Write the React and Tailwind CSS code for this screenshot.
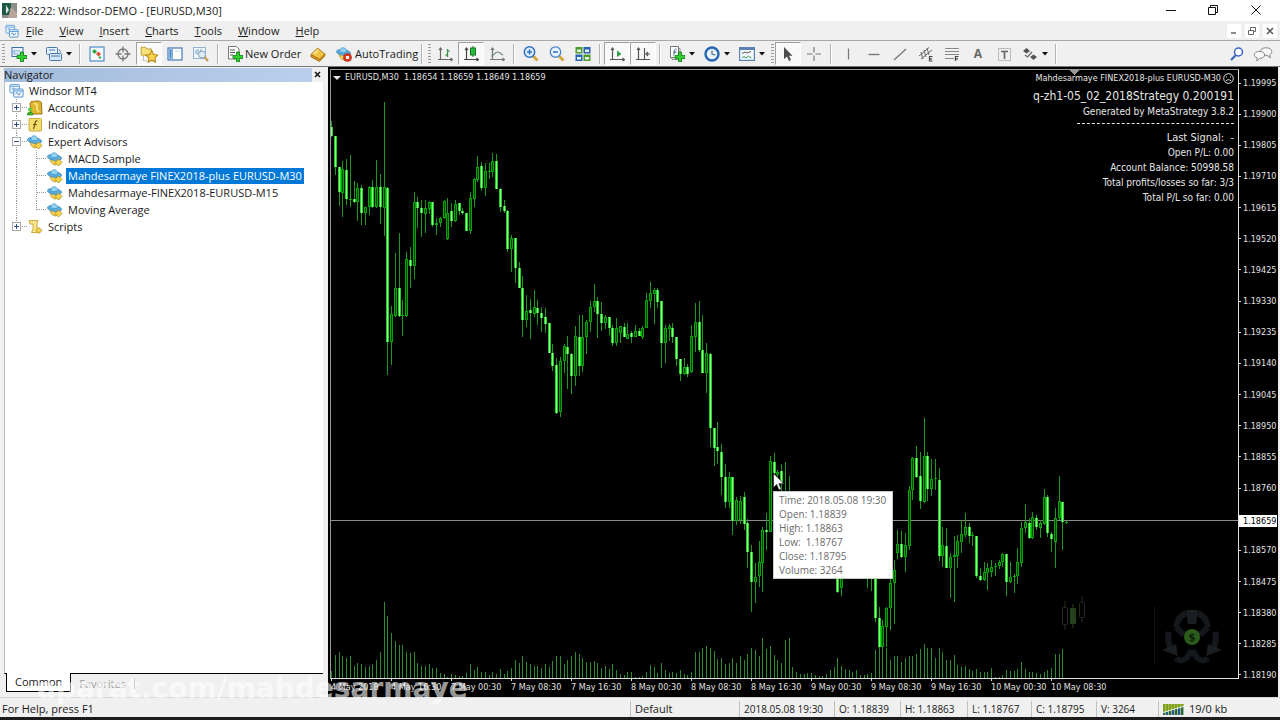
import React, { useState } from 'react';
import clsx from 'clsx';

const uiFont = "font-['Open_Sans','Noto_Sans',sans-serif]";
const chartFont = "font-['DejaVu_Sans_Condensed','DejaVu_Sans',sans-serif]";

// [high, body top, body bottom, low, 1 = falling / 0 = rising]
const candles = [
  [121, 127, 136, 137, 1], [136, 136, 167, 175, 1], [167, 167, 192, 206, 1], [161, 169, 193, 217, 0],
  [159, 170, 199, 205, 1], [155, 199, 200, 207, 0], [181, 199, 202, 203, 1], [183, 188, 202, 221, 0],
  [185, 188, 213, 225, 1], [207, 207, 213, 225, 0], [186, 187, 207, 215, 0], [180, 187, 207, 208, 1],
  [160, 187, 207, 208, 0], [174, 187, 207, 224, 1], [102, 187, 208, 236, 0], [187, 188, 342, 375, 1],
  [306, 314, 342, 365, 0], [253, 288, 316, 317, 0], [233, 288, 316, 317, 1], [300, 315, 316, 336, 0],
  [252, 259, 316, 317, 0], [247, 260, 266, 288, 1], [192, 202, 266, 279, 0], [197, 202, 208, 228, 1],
  [200, 208, 213, 237, 1], [200, 208, 214, 233, 0], [201, 202, 209, 214, 0], [202, 202, 225, 227, 1],
  [218, 223, 225, 235, 0], [217, 218, 223, 227, 0], [200, 201, 218, 219, 0], [198, 213, 239, 240, 0],
  [203, 211, 221, 227, 1], [200, 204, 221, 222, 0], [203, 203, 211, 215, 1], [208, 211, 213, 215, 1],
  [213, 213, 231, 231, 1], [192, 198, 231, 234, 0], [178, 179, 199, 207, 0], [156, 167, 180, 182, 0],
  [162, 166, 188, 191, 1], [163, 171, 188, 196, 0], [163, 171, 172, 179, 0], [153, 161, 172, 177, 0],
  [154, 161, 189, 189, 1], [188, 189, 207, 212, 1], [200, 206, 211, 213, 1], [210, 211, 249, 252, 1],
  [235, 238, 249, 272, 0], [238, 238, 268, 283, 1], [262, 268, 288, 288, 1], [276, 288, 320, 337, 1],
  [295, 311, 320, 327, 0], [299, 310, 313, 339, 1], [290, 307, 314, 317, 0], [300, 308, 313, 325, 1],
  [307, 313, 318, 332, 1], [308, 317, 324, 333, 1], [323, 323, 353, 353, 1], [344, 353, 366, 371, 1],
  [358, 365, 413, 414, 1], [357, 361, 412, 417, 0], [344, 346, 361, 373, 0], [336, 347, 354, 389, 1],
  [353, 354, 376, 394, 1], [326, 336, 376, 386, 0], [315, 337, 366, 376, 1], [315, 337, 366, 372, 0],
  [320, 322, 337, 354, 0], [301, 307, 322, 332, 0], [284, 301, 307, 312, 0], [297, 301, 314, 338, 1],
  [302, 314, 323, 331, 1], [315, 317, 323, 329, 0], [317, 317, 328, 335, 1], [325, 328, 343, 346, 1],
  [318, 328, 343, 346, 0], [326, 326, 333, 343, 0], [323, 327, 337, 337, 1], [323, 334, 339, 339, 0],
  [331, 333, 337, 343, 1], [325, 331, 337, 337, 0], [328, 331, 336, 336, 1], [326, 328, 337, 339, 0],
  [293, 300, 328, 328, 0], [282, 293, 301, 308, 0], [288, 290, 294, 324, 0], [288, 290, 302, 308, 1],
  [301, 301, 343, 368, 1], [325, 328, 343, 363, 0], [324, 326, 329, 341, 0], [323, 328, 337, 343, 1],
  [337, 337, 359, 366, 1], [359, 359, 374, 381, 1], [358, 367, 374, 375, 0], [364, 367, 374, 377, 1],
  [325, 336, 372, 373, 0], [303, 322, 337, 352, 0], [301, 322, 350, 352, 1], [315, 350, 373, 373, 1],
  [343, 353, 373, 393, 0], [353, 354, 428, 447, 1], [428, 428, 448, 466, 1], [422, 447, 451, 464, 1],
  [444, 452, 477, 495, 1], [464, 477, 502, 508, 1], [472, 477, 502, 508, 0], [477, 477, 521, 535, 1],
  [497, 500, 521, 525, 0], [496, 501, 520, 524, 0], [492, 497, 524, 530, 1], [519, 523, 552, 568, 1],
  [545, 552, 582, 612, 1], [563, 577, 582, 603, 0], [541, 562, 576, 587, 0], [527, 530, 563, 592, 0],
  [513, 530, 532, 550, 1], [456, 461, 532, 532, 0], [453, 462, 473, 475, 1], [470, 472, 475, 477, 0],
  [464, 471, 482, 493, 1], [462, 492, 500, 510, 0], [476, 492, 512, 520, 1], [505, 512, 530, 534, 1],
  [512, 516, 530, 540, 0], [510, 516, 528, 535, 1], [520, 528, 541, 548, 1], [526, 530, 541, 550, 0],
  [524, 530, 545, 552, 1], [530, 545, 552, 560, 1], [535, 541, 552, 561, 0], [538, 541, 556, 562, 1],
  [545, 550, 556, 566, 0], [544, 550, 560, 570, 1], [548, 560, 568, 572, 1], [560, 568, 592, 593, 1],
  [562, 572, 588, 596, 0], [550, 560, 572, 575, 0], [548, 552, 560, 570, 0], [545, 552, 562, 570, 1],
  [540, 550, 562, 566, 0], [545, 550, 560, 570, 1], [550, 558, 566, 572, 1], [550, 566, 572, 588, 1],
  [548, 560, 572, 591, 0], [552, 560, 618, 622, 1], [607, 618, 647, 648, 1], [620, 626, 647, 648, 0],
  [607, 608, 627, 647, 0], [570, 583, 608, 630, 0], [560, 570, 583, 624, 0], [530, 544, 553, 559, 0],
  [531, 544, 557, 558, 1], [533, 545, 557, 572, 0], [486, 490, 546, 550, 0], [457, 458, 490, 500, 0],
  [446, 458, 477, 478, 1], [452, 476, 501, 509, 1], [418, 456, 502, 503, 0], [452, 456, 489, 501, 1],
  [459, 479, 489, 496, 0], [459, 478, 479, 490, 0], [468, 480, 556, 561, 1], [527, 545, 556, 567, 0],
  [528, 546, 568, 568, 1], [553, 557, 568, 598, 0], [536, 555, 557, 602, 0], [535, 541, 556, 568, 0],
  [520, 534, 542, 553, 0], [513, 527, 535, 537, 0], [523, 527, 536, 543, 1], [532, 535, 536, 546, 0],
  [536, 536, 576, 578, 1], [568, 576, 580, 581, 1], [562, 572, 580, 581, 0], [563, 568, 573, 590, 0],
  [560, 567, 572, 577, 0], [563, 566, 567, 576, 0], [560, 562, 566, 569, 0], [553, 554, 562, 567, 0],
  [554, 554, 582, 596, 1], [562, 577, 582, 583, 0], [574, 576, 577, 593, 0], [548, 562, 576, 584, 0],
  [522, 528, 563, 567, 0], [504, 522, 528, 533, 0], [518, 523, 538, 539, 1], [512, 517, 538, 539, 0],
  [515, 518, 527, 530, 1], [520, 523, 528, 538, 0], [489, 497, 524, 525, 0], [495, 497, 533, 537, 1],
  [532, 534, 539, 552, 1], [508, 518, 542, 568, 0], [476, 501, 518, 520, 0], [502, 502, 522, 550, 1],
  [521, 522, 523, 524, 0],
];

const volumes = [
  7, 23, 26, 22, 20, 22, 12, 15, 14, 11, 12, 14, 18, 26, 76, 62, 45, 37, 33, 33, 26, 25, 26, 15, 12, 12, 14,
  10, 10, 5, 4, 1, 4, 3, 2, 2, 5, 14, 8, 11, 6, 6, 3, 6, 4, 9, 4, 7, 10, 18, 15, 22, 16, 14, 12, 12, 10, 14,
  11, 17, 22, 22, 14, 18, 22, 26, 24, 20, 16, 16, 17, 15, 10, 12, 9, 14, 8, 4, 3, 6, 6, 1, 1, 2, 6, 13, 11,
  5, 15, 8, 5, 6, 5, 8, 4, 3, 6, 26, 26, 30, 32, 30, 27, 19, 20, 14, 15, 20, 15, 22, 18, 24, 30, 28, 22, 40,
  29, 32, 23, 18, 15, 38, 40, 11, 6, 4, 4, 5, 5, 3, 2, 2, 4, 8, 11, 20, 12, 9, 8, 6, 8, 3, 3, 4, 5, 28, 30,
  30, 30, 18, 22, 22, 16, 20, 22, 22, 24, 29, 34, 30, 30, 20, 30, 26, 18, 18, 23, 13, 11, 12, 9, 7, 9, 6, 6,
  6, 10, 1, 1, 3, 8, 7, 7, 9, 16, 9, 6, 6, 5, 4, 6, 8, 10, 24, 24, 29,
];

const prices = [
  '1.19995', '1.19900', '1.19805', '1.19710', '1.19615', '1.19520', '1.19425', '1.19330', '1.19235', '1.19140',
  '1.19045', '1.18950', '1.18855', '1.18760', '1.18665', '1.18570', '1.18475', '1.18380', '1.18285', '1.18190',
];

const times = [
  '4 May 2018', '4 May 16:30', '7 May 00:30', '7 May 08:30', '7 May 16:30', '8 May 00:30', '8 May 08:30',
  '8 May 16:30', '9 May 00:30', '9 May 08:30', '9 May 16:30', '10 May 00:30', '10 May 08:30',
];

const Icon = ({ children, size = 16 }) => (
  <svg width={size} height={size} viewBox="0 0 16 16" fill="none" className="shrink-0" aria-hidden="true">
    {children}
  </svg>
);

const Plus = () => (
  <path d="M9.500 6h3v3.500H16v3h-3.500V16h-3v-3.500H6v-3h3.500z" fill="#2fd02f" stroke="#0a7a12" strokeWidth=".8" />
);

const WindowsIcon = ({ size = 14 }) => (
  <Icon size={size}>
    <rect x="1" y="1.500" width="10" height="9" rx="1" fill="#eef6ff" stroke="#5b9bd8" />
    <path d="M1 3.500h10M3 7l1.500-2 1.500 2" stroke="#5b9bd8" />
    <rect x="5" y="6.500" width="10" height="8.500" rx="1" fill="#f6faff" stroke="#4a8bcb" />
    <path d="M5 8.500h10M7 12l1.500-2 2 3 2-3" stroke="#4a8bcb" />
  </Icon>
);

const ExpertIcon = ({ size = 16, children }) => (
  <Icon size={size}>
    <path d="M3 8.500c1 4 3 5.500 6 5.500l2-6z" fill="#f1cf54" stroke="#b38a1c" strokeWidth=".7" />
    <ellipse cx="7.500" cy="6.500" rx="7.200" ry="2.800" fill="#5cadde" stroke="#2f83b8" strokeWidth=".7" transform="rotate(8 7.500 6.500)" />
    <path d="M3.500 5.500C4 1 9.500 0 11 5.500c-2 1.500-5 1.500-7.500 0z" fill="#93d2f1" stroke="#3a90c4" strokeWidth=".7" />
    {children || <path d="M11.500 8l3.500 3.500-3.500 3.500L8 11.500z" fill="#f7d64e" stroke="#ad8213" strokeWidth=".8" />}
  </Icon>
);

const icons = {
  newChart: (
    <Icon>
      <rect x="1" y="1.500" width="11" height="9" fill="#eaf4ff" stroke="#3f6fa8" />
      <path d="M3 8V4m0 1h6M3 8h6" stroke="#7da7d4" />
      <Plus />
    </Icon>
  ),
  profiles: (
    <Icon>
      <rect x=".5" y="1.500" width="11" height="7" rx="1" fill="#e8f2fd" stroke="#4774ae" />
      <path d="M3 4h6" stroke="#4774ae" />
      <rect x="3.500" y="7.500" width="12" height="7" rx="1" fill="#d5e7fa" stroke="#4774ae" />
      <path d="M5 10h9M13 3.500l2 3" stroke="#4774ae" />
    </Icon>
  ),
  market: (
    <Icon>
      <rect x="1" y="1" width="14" height="14" fill="#f7fbff" stroke="#5d93c9" strokeWidth="1.300" />
      <path d="M5.500 3L8 5.500 5.500 8 3 5.500z" fill="#27a844" />
      <path d="M9.500 5.500L12 8l-2.500 2.500L7 8z" fill="#e04a2f" />
      <path d="M11 10l1.500 1.500L11 13l-1.500-1.500z" fill="#27a844" />
    </Icon>
  ),
  data: (
    <Icon>
      <circle cx="8" cy="8" r="5" stroke="#777" strokeWidth="1.300" />
      <path d="M8 .5v6M8 9.500v6M.5 8h6M9.500 8h6" stroke="#777" strokeWidth="1.300" />
    </Icon>
  ),
  navigator: (
    <Icon size={18}>
      <path d="M1 2h4l1 1.500h4V9H1z" fill="#f6e27a" stroke="#b9982b" strokeWidth=".8" />
      <path d="M3 10v4h3" stroke="#999" strokeDasharray="1 1" />
      <path d="M10.500 5l1.700 3.400 3.600.5-2.600 2.600.6 3.800-3.300-1.800-3.300 1.800.6-3.800L5.200 8.900l3.600-.5z" fill="#f9d44a" stroke="#b48414" strokeWidth=".9" />
    </Icon>
  ),
  terminal: (
    <Icon>
      <rect x="1" y="2" width="14" height="12" fill="#fff" stroke="#4578b4" strokeWidth="1.200" />
      <path d="M2 3h4v10H2z" fill="#7fb0e2" />
      <path d="M3 5h1M3 7.500h1M3 10h1" stroke="#1e4777" />
      <path d="M8 5h5" stroke="#bcd3ea" />
    </Icon>
  ),
  tester: (
    <Icon>
      <rect x=".5" y="1.500" width="12" height="11" fill="#eef5fb" stroke="#92b2d2" />
      <path d="M3 4v4m2-5v6m3-6v4" stroke="#7d9dbd" />
      <circle cx="9" cy="8.500" r="3.500" fill="#d6e9f7" fillOpacity=".7" stroke="#8aa6bf" />
      <path d="M11.500 11l3.500 4" stroke="#c79a4e" strokeWidth="2" />
    </Icon>
  ),
  order: (
    <Icon>
      <path d="M1.500.5h8L12 3v10H1.500z" fill="#fff" stroke="#777" />
      <path d="M3 4h5M3 6.500h5M3 9h3" stroke="#555" />
      <Plus />
    </Icon>
  ),
  book: (
    <Icon>
      <path d="M1 8.500L7.500 2 15 8l-5.500 6z" fill="#f2c443" stroke="#9c6a10" strokeWidth=".8" />
      <path d="M1 8.500v2.500l8.500 4.500L15 10V8l-5.500 5z" fill="#d08d1c" stroke="#9c6a10" strokeWidth=".7" />
      <path d="M4 8l4-4" stroke="#fff0a8" strokeWidth="1.500" />
    </Icon>
  ),
  auto: (
    <ExpertIcon>
      <circle cx="11.500" cy="11.500" r="4" fill="#e03a21" stroke="#9d1a0d" strokeWidth=".6" />
      <rect x="10" y="10" width="3" height="3" fill="#fff" />
    </ExpertIcon>
  ),
  bars: (
    <Icon>
      <path d="M3.500 2v12M1 13.500h14M2 4l1.500-2L5 4M13.500 12l2 1.500-2 1.500" stroke="#666" strokeWidth="1.200" />
      <path d="M10.500 3v8M8.500 9h2M10.500 5h2" stroke="#3f9150" strokeWidth="1.300" />
    </Icon>
  ),
  candles: (
    <Icon>
      <path d="M3.500 2v12M1 13.500h14M2 4l1.500-2L5 4M13.500 12l2 1.500-2 1.500" stroke="#444" strokeWidth="1.200" />
      <path d="M10 0v11" stroke="#137522" />
      <rect x="7.500" y="2" width="5" height="7" fill="#23bd3b" stroke="#137522" />
    </Icon>
  ),
  line: (
    <Icon>
      <path d="M3.500 2v12M1 13.500h14M2 4l1.500-2L5 4M13.500 12l2 1.500-2 1.500" stroke="#777" strokeWidth="1.200" />
      <path d="M2 10c3 0 4-4 6.500-4S12 8 14 9" stroke="#6f8d76" strokeWidth="1.200" />
    </Icon>
  ),
  zoomIn: (
    <Icon>
      <path d="M10 10l4.500 4.500" stroke="#d3a738" strokeWidth="3" />
      <circle cx="6.500" cy="6" r="5.200" fill="#dcefff" stroke="#2f6fbd" strokeWidth="1.500" />
      <path d="M6.500 3.500v5M4 6h5" stroke="#2f6fbd" strokeWidth="1.500" />
    </Icon>
  ),
  zoomOut: (
    <Icon>
      <path d="M10 10l4.500 4.500" stroke="#d3a738" strokeWidth="3" />
      <circle cx="6.500" cy="6" r="5.200" fill="#e6f3ff" stroke="#4b86c9" strokeWidth="1.300" />
      <path d="M4 6h5" stroke="#2f6fbd" strokeWidth="1.500" />
    </Icon>
  ),
  tile: (
    <Icon>
      <rect x=".5" y="1" width="7" height="6.500" fill="#4a9d2d" />
      <rect x="8.500" y="1" width="7" height="6.500" fill="#2b63b5" />
      <rect x=".5" y="8.500" width="7" height="6.500" fill="#2b63b5" />
      <rect x="8.500" y="8.500" width="7" height="6.500" fill="#4a9d2d" />
      <path d="M2 3.500h4V6H2zM10 3.500h4V6h-4zM2 11h4v2.500H2zM10 11h4v2.500h-4z" fill="#e8f4e8" />
    </Icon>
  ),
  scroll: (
    <Icon>
      <path d="M3.500 2v12M1 13.500h14M2 4l1.500-2L5 4M13.500 12l2 1.500-2 1.500" stroke="#555" strokeWidth="1.200" />
      <path d="M8 4.500L12.500 8 8 11z" fill="#2c9c49" />
    </Icon>
  ),
  shift: (
    <Icon>
      <path d="M3.500 2v12M1 13.500h14M2 4l1.500-2L5 4M9.500 2v12" stroke="#555" strokeWidth="1.200" />
      <path d="M15 8h-4M13 6l-2 2 2 2" stroke="#555" strokeWidth="1.200" />
    </Icon>
  ),
  indicator: (
    <Icon>
      <path d="M3 2.500h8v11H3z" fill="#fff" stroke="#888" />
      <path d="M1.500.5h8v11h-8z" fill="#fff" stroke="#777" />
      <path d="M7.500 3C5 2.500 6 6 4.500 9.500M4 6h3.500" stroke="#44618a" />
      <Plus />
    </Icon>
  ),
  clock: (
    <Icon>
      <circle cx="8" cy="8" r="6.500" fill="#eaf3fc" stroke="#2467b3" strokeWidth="2.400" />
      <path d="M8 4.500V8l3.500 1" stroke="#47698f" strokeWidth="1.200" />
    </Icon>
  ),
  template: (
    <Icon>
      <rect x=".6" y="1.600" width="14.800" height="12.800" fill="#f4faff" stroke="#5a83b4" strokeWidth="1.200" />
      <path d="M1 3h14" stroke="#5a83b4" strokeWidth="2" />
      <path d="M3 7.500l3-1.500 2 1 4-1.500" stroke="#555" />
      <path d="M3 12l2-1.500 2 1.500 2.500-2 3 2" stroke="#3c9a57" />
    </Icon>
  ),
  cursor: (
    <Icon>
      <path d="M4 1v12l3-2.500 2 4.500 2-1-2-4.300h3.500z" fill="#4c4c4c" />
    </Icon>
  ),
  cross: (
    <Icon>
      <path d="M8 1v5.500M8 9.500V15M1 8h5.500M9.500 8H15" stroke="#777" strokeWidth="1.200" />
    </Icon>
  ),
  vline: (
    <Icon>
      <path d="M8.500 2.500v11" stroke="#777" strokeWidth="1.200" />
    </Icon>
  ),
  hline: (
    <Icon>
      <path d="M2.500 8.500h11" stroke="#777" strokeWidth="1.400" />
    </Icon>
  ),
  trend: (
    <Icon>
      <path d="M2 14L14 3" stroke="#777" strokeWidth="1.300" />
    </Icon>
  ),
  channel: (
    <Icon>
      <path d="M1 10L11 1.500M3 13l11-9M3 6l2 7M6 4l2 7M9 2l2 7" stroke="#666" />
      <path d="M14.500 10.500H11.500v4.500h3M11.500 12.800H14" stroke="#444" strokeWidth="1.200" />
    </Icon>
  ),
  fibo: (
    <Icon>
      <path d="M1 2.500h14M1 5.500h14M1 8.500h14M1 12.500h9" stroke="#888" />
      <path d="M14.500 10.500h-3V15M11.500 12.800H14" stroke="#444" strokeWidth="1.200" />
    </Icon>
  ),
  label: (
    <Icon>
      <rect x="2.500" y="2.500" width="12" height="12" stroke="#888" strokeDasharray="1 1" />
      <path d="M5 5.500h7M8.500 5.500V13" stroke="#666" strokeWidth="1.700" />
    </Icon>
  ),
  arrows: (
    <Icon>
      <path d="M1 5l3.500-3L8 5 4.500 7.500z" fill="#555" />
      <path d="M3 9l2.500 2L10 6" stroke="#666" strokeWidth="1.200" />
      <path d="M8 11l3.500-2.500L15 11l-3.500 3z" fill="#555" />
    </Icon>
  ),
  search: (
    <Icon>
      <path d="M7 9l-5 5" stroke="#3b63c4" strokeWidth="2.200" />
      <circle cx="9.500" cy="6" r="4" fill="#fff" stroke="#3b63c4" strokeWidth="1.500" />
    </Icon>
  ),
  chat: (
    <Icon size={20}>
      <path d="M10 3c3 0 5 1.200 5 3 0 1.300-.7 2.200-1.700 2.600L14 11l-2.800-2H9C7 8.500 6 7.500 6 6c0-1.800 1.800-3 4-3z" fill="#f7f7f7" stroke="#888" strokeWidth=".8" />
      <path d="M5 6c2.600 0 4.300 1 4.300 2.700S7.600 11.400 5.500 11.400L3 13.500l.3-2.500C1.800 10.600 1 9.800 1 8.700 1 7 2.700 6 5 6z" fill="#f7f7f7" stroke="#888" strokeWidth=".8" />
    </Icon>
  ),
  accounts: (
    <Icon>
      <path d="M3 4c0-2 1.500-3 3.500-2.500C8 .5 14 .5 14.500 3L15 14H4z" fill="#dfb52e" stroke="#8d6a10" strokeWidth=".9" />
      <path d="M7 4c2-1 4 1 3 3s1 4 2 5" stroke="#fbe88d" strokeWidth="1.500" />
      <circle cx="3" cy="9.500" r="2" fill="#5bcf45" />
      <path d="M0 15c0-4 6-4 6 0z" fill="#3ab52c" stroke="#1f7d16" strokeWidth=".6" />
    </Icon>
  ),
  indicators: (
    <Icon>
      <rect x="2" y="1.500" width="12.500" height="12.500" rx="1" fill="#f7de6c" stroke="#c8a83f" />
      <path d="M10.500 4c-3-1-2 3-4 8M6 7.500h4" stroke="#6e520b" strokeWidth="1.200" />
    </Icon>
  ),
  scripts: (
    <Icon>
      <path d="M2 1.500h9l-1 3v6l2 3H4.500L6 10V5H3z" fill="#f9e58a" stroke="#c8a83f" />
      <path d="M12 8.500l3 3-3 3-3-3z" fill="#f7d64e" stroke="#ad8213" strokeWidth=".8" />
    </Icon>
  ),
};

const Caret = () => (
  <svg width="6" height="4" viewBox="0 0 6 4" className="shrink-0" aria-hidden="true">
    <path d="M0 0h6L3 3.500z" fill="#111" />
  </svg>
);

const Tool = ({ icon, label, pressed, children }) => (
  <button
    type="button"
    aria-label={label}
    aria-pressed={pressed}
    className={clsx(
      'flex h-[23px] w-[26px] shrink-0 items-center justify-center border',
      pressed ? 'border-t-[#a0a0a0] border-l-[#a0a0a0] border-r-white border-b-white bg-[#f9f9f9]' : 'border-transparent'
    )}
  >
    {children || icons[icon]}
  </button>
);

const DropTool = ({ icon, label }) => (
  <button type="button" aria-label={label} className="flex h-[23px] w-[35px] shrink-0 items-center gap-1 pl-[5px]">
    {icons[icon]}
    <Caret />
  </button>
);

const Sep = () => <div className="mx-[3px] h-[20px] w-[2px] shrink-0 border-l border-[#b4b4b4] bg-white" />;
const Grip = () => (
  <div className="mr-px ml-[2px] h-[19px] w-[3px] shrink-0 bg-[repeating-linear-gradient(#9c9c9c_0_1px,transparent_1px_3px)]" />
);

const TitleBar = () => (
  <header className="flex h-[21px] items-center bg-white pr-[2px] pl-[2px]">
    <svg width="15" height="15" viewBox="0 0 15 15" className="shrink-0" aria-hidden="true">
      <path d="M0 0h15v15H0z" fill="#8c8f88" />
      <path d="M0 0h9v12H0z" fill="#1d5b47" />
      <path d="M4 2l3 5-3 4z" fill="#dfe7df" />
      <path d="M9 4l6 6v5H6z" fill="#b9a59c" />
    </svg>
    <h1 className="ml-[4px] flex-1">28222: Windsor-DEMO - [EURUSD,M30]</h1>
    <div className="flex">
      <button type="button" aria-label="Minimize" className="flex w-[42px] justify-center">
        <svg width="11" height="11" viewBox="0 0 11 11"><path d="M0 5.500h10" stroke="#111" /></svg>
      </button>
      <button type="button" aria-label="Restore" className="flex w-[43px] justify-center">
        <svg width="11" height="11" viewBox="0 0 11 11" fill="none"><path d="M.5 2.500h7v7h-7zM2.500 2.500v-2h7v7h-2" stroke="#111" /></svg>
      </button>
      <button type="button" aria-label="Close" className="flex w-[43px] justify-center">
        <svg width="11" height="11" viewBox="0 0 11 11"><path d="M.5.5l9 9M9.500.5l-9 9" stroke="#111" /></svg>
      </button>
    </div>
  </header>
);

const MenuBar = () => (
  <nav className="flex h-[20px] items-center border-b border-[#a9a9a9] bg-[#f0f0f0] pl-[5px]">
    <WindowsIcon />
    <div className="ml-[7px] flex flex-1 gap-[16px]">
      {['File', 'View', 'Insert', 'Charts', 'Tools', 'Window', 'Help'].map((item) => (
        <button type="button" key={item} className="first-letter:underline">
          {item}
        </button>
      ))}
    </div>
    <div className="flex gap-[4px] pr-[3px]">
      <button type="button" aria-label="Minimize chart" className="flex h-[14px] w-[14px] items-center justify-center bg-white">
        <svg width="8" height="8" viewBox="0 0 8 8"><path d="M1 6h5" stroke="#666" strokeWidth="1.500" /></svg>
      </button>
      <button type="button" aria-label="Restore chart" className="flex h-[14px] w-[14px] items-center justify-center bg-white">
        <svg width="8" height="8" viewBox="0 0 8 8" fill="none"><path d="M.5 3.500h5v4h-5zM2.500 3V.5h5v4H6" stroke="#666" /></svg>
      </button>
      <button type="button" aria-label="Close chart" className="flex h-[14px] w-[14px] items-center justify-center bg-white">
        <svg width="8" height="8" viewBox="0 0 8 8"><path d="M1 1l6 6M7 1L1 7" stroke="#555" strokeWidth="1.500" /></svg>
      </button>
    </div>
  </nav>
);

const Toolbar = () => (
  <div className="flex h-[25px] items-center bg-[#f0f0f0]">
    <Grip />
    <DropTool icon="newChart" label="New chart" />
    <DropTool icon="profiles" label="Profiles" />
    <Sep />
    <Tool icon="market" label="Market Watch" />
    <Tool icon="data" label="Data Window" />
    <Tool icon="navigator" label="Navigator" pressed />
    <Tool icon="terminal" label="Terminal" />
    <Tool icon="tester" label="Strategy Tester" />
    <Sep />
    <button type="button" className="flex h-[23px] w-[83px] shrink-0 items-center gap-[2px] pl-[5px] whitespace-nowrap">
      {icons.order}
      New Order
    </button>
    <Tool icon="book" label="MetaEditor" />
    <button type="button" className="flex h-[23px] w-[87px] shrink-0 items-center gap-[3px] pl-[5px] whitespace-nowrap">
      {icons.auto}
      AutoTrading
    </button>
    <Sep />
    <Grip />
    <Tool icon="bars" label="Bar chart" />
    <Tool icon="candles" label="Candlesticks" pressed />
    <Tool icon="line" label="Line chart" />
    <Sep />
    <Tool icon="zoomIn" label="Zoom in" />
    <Tool icon="zoomOut" label="Zoom out" />
    <Tool icon="tile" label="Tile windows" />
    <Sep />
    <Tool icon="scroll" label="Auto scroll" pressed />
    <Tool icon="shift" label="Chart shift" pressed />
    <Sep />
    <DropTool icon="indicator" label="Indicators" />
    <DropTool icon="clock" label="Periods" />
    <DropTool icon="template" label="Templates" />
    <Grip />
    <Tool icon="cursor" label="Cursor" pressed />
    <Tool icon="cross" label="Crosshair" />
    <Sep />
    <Tool icon="vline" label="Vertical line" />
    <Tool icon="hline" label="Horizontal line" />
    <Tool icon="trend" label="Trendline" />
    <Tool icon="channel" label="Equidistant channel" />
    <Tool icon="fibo" label="Fibonacci retracement" />
    <Tool label="Text">
      <span className="text-[12px] font-bold text-[#666]">A</span>
    </Tool>
    <Tool icon="label" label="Text label" />
    <DropTool icon="arrows" label="Arrows" />
    <Sep />
    <div className="ml-auto flex pr-[4px]">
      <Tool icon="search" label="Search" />
      <Tool icon="chat" label="Chat" />
    </div>
  </div>
);

const Expander = ({ open }) => (
  <button
    type="button"
    aria-label={open ? 'Collapse' : 'Expand'}
    className="relative flex h-[9px] w-[9px] items-center justify-center border border-[#a8a8a8] bg-white"
  >
    <svg width="5" height="5" viewBox="0 0 5 5">
      <path d={open ? 'M0 2.500h5' : 'M0 2.500h5M2.500 0v5'} stroke="#2b4a8a" />
    </svg>
  </button>
);

const Branch = ({ icon, label, open, last, children }) => (
  <li>
    <div className="flex h-[17px] items-center">
      <div className="relative flex h-full w-[22px] items-center pl-[7px]">
        <span className={clsx('absolute top-0 left-[11px] border-l border-dotted border-[#999]', last ? 'h-[9px]' : 'h-full')} />
        <span className="absolute top-[8px] left-[15px] w-[7px] border-t border-dotted border-[#999]" />
        <Expander open={open} />
      </div>
      {icon}
      <span className="ml-[5px]">{label}</span>
    </div>
    {children}
  </li>
);

const experts = [
  'MACD Sample',
  'Mahdesarmaye FINEX2018-plus EURUSD-M30',
  'Mahdesarmaye-FINEX2018-EURUSD-M15',
  'Moving Average',
];

const Navigator = () => {
  const [selected, setSelected] = useState(experts[1]);
  const [tab, setTab] = useState('Common');

  return (
    <aside className="flex w-[328px] shrink-0 flex-col bg-[#f0f0f0] pr-[5px] pl-[4px]">
      <div className="flex h-[15px] items-center">
        <h2 className="h-[14px] flex-1 bg-linear-to-r from-[#a3bcdb] to-[#b9cfec] leading-[14px]">Navigator</h2>
        <button type="button" aria-label="Close navigator" className="flex w-[11px] justify-center">
          <svg width="7" height="7" viewBox="0 0 7 7"><path d="M1 1l5 5M6 1L1 6" stroke="#111" strokeWidth="1.500" /></svg>
        </button>
      </div>
      <div className="flex-1 border-b border-l border-b-black border-l-[#bbb] bg-white">
        <div className="flex h-[17px] items-center gap-[5px] pl-[4px]">
          <WindowsIcon size={15} />
          Windsor MT4
        </div>
        <ul>
          <Branch icon={icons.accounts} label="Accounts" />
          <Branch icon={icons.indicators} label="Indicators" />
          <Branch icon={<ExpertIcon />} label="Expert Advisors" open>
            <ul>
              {experts.map((name, i) => (
                <li key={name} className="flex h-[17px] items-center">
                  <div className="relative h-full w-[42px]">
                    <span className="absolute top-0 left-[11px] h-full border-l border-dotted border-[#999]" />
                    <span className={clsx('absolute top-0 left-[31px] border-l border-dotted border-[#999]', i === 3 ? 'h-[9px]' : 'h-full')} />
                    <span className="absolute top-[8px] left-[31px] w-[10px] border-t border-dotted border-[#999]" />
                  </div>
                  <ExpertIcon />
                  <button
                    type="button"
                    onClick={() => setSelected(name)}
                    className={clsx('ml-[3px] h-[16px] px-[2px] leading-[16px]', selected === name && 'bg-[#0078d7] text-white')}
                  >
                    {name}
                  </button>
                </li>
              ))}
            </ul>
          </Branch>
          <Branch icon={icons.scripts} label="Scripts" last />
        </ul>
      </div>
      <div className="flex h-[23px] items-start pl-[2px]">
        {['Common', 'Favorites'].map((name) => (
          <button
            type="button"
            key={name}
            onClick={() => setTab(name)}
            className={clsx(
              'h-[19px] px-[8px] leading-[18px]',
              tab === name ? '-mt-px border-x border-b border-black bg-white' : 'text-[#9a9a9a]'
            )}
          >
            {name}
          </button>
        ))}
        <div className="mt-[4px] h-[11px] w-px bg-[#888]" />
      </div>
    </aside>
  );
};

const Candle = ({ x, bar }) => {
  const [high, top, bottom, low, falling] = bar;
  const height = Math.max(bottom - top, 1);
  return (
    <g>
      <rect x={x} y={high} width="1" height={low - high} fill="#1c981c" />
      <rect x={x - 1} y={top} width="3" height={height} fill={falling ? '#1fd01f' : '#00a800'} />
      {falling ? (
        <rect x={x} y={top} width="1" height={height} fill="#8cff8c" />
      ) : (
        height > 2 && <rect x={x} y={top + 1} width="1" height={height - 2} fill="#004600" />
      )}
    </g>
  );
};

const Plot = () => (
  <svg width="100%" height="100%" className="absolute inset-0" role="img" aria-label="EURUSD M30 candlestick chart" shapeRendering="crispEdges">
    <g transform="translate(0 -70)">
      <rect y="520" width="100%" height="1" fill="#8c8c8c" />
      {volumes.map((v, i) => (
        <rect key={i} x={Math.round(i * 3.75)} y={678 - v} width="1" height={v} fill="#2c8a30" />
      ))}
      {candles.map((bar, i) => (
        <Candle key={i} x={Math.round(i * 3.75)} bar={bar} />
      ))}
      <path d="M738 70h10l-5 5z" fill="#9a9a9a" />
    </g>
  </svg>
);

// faint channel logo in the corner of the chart
const Logo = () => (
  <svg width="160" height="76" viewBox="0 0 160 76" className="absolute right-[16px] bottom-[6px]" aria-hidden="true">
    <g stroke="#222d1f" fill="none">
      <rect x=".5" y="11.500" width="5" height="17" rx="1" />
      <path d="M3 5v6M3 28v6M20 0v6M20 21v6" />
      <rect x="17.500" y="6.500" width="5" height="15" rx="1" />
    </g>
    <rect x="8" y="12" width="6" height="16" fill="#27401c" />
    <path d="M11 8v24" stroke="#27401c" />
    <path d="M92.500 10v58" stroke="#101316" />
    <g fill="none" stroke="#14181c" strokeWidth="6">
      <path d="M114 31a18 18 0 0 1 10-14M136 17a18 18 0 0 1 10 14" />
      <path d="M114 31l8 8M146 31l-8 8" />
      <path d="M107 36a22 22 0 0 0 3 18M153 36a22 22 0 0 1-3 18" />
      <path d="M114 62c4 4 10 4 16-8M146 62c-4 4-10 4-16-8" />
    </g>
    <g fill="#191e23">
      <path d="M124 14h12l-2 14h-8zM100 54l14-6 2 12zM160 54l-14-6-2 12z" />
    </g>
    <circle cx="130" cy="41" r="8" fill="#2c5c1c" />
    <text x="130" y="45" textAnchor="middle" fontSize="11" fontWeight="700" fill="#0d1f0a">$</text>
  </svg>
);

const Tooltip = () => (
  <div
    role="tooltip"
    className={clsx(
      'absolute top-[421px] left-[442px] border border-[#c8c8c8] bg-white py-px pr-[6px] pl-[5px] text-[10px] leading-[14px] whitespace-pre text-[#6b6b6b]',
      uiFont
    )}
  >
    <p>Time: 2018.05.08 19:30</p>
    <p>Open: 1.18839</p>
    <p>High: 1.18863</p>
    <p>Low:  1.18767</p>
    <p>Close: 1.18795</p>
    <p>Volume: 3264</p>
  </div>
);

const Comment = () => (
  <div className="absolute top-[2px] right-[4px] text-right text-[10px] leading-[15px] whitespace-pre text-[#e6e6e6]">
    <p className="flex items-center justify-end gap-[2px] text-[9px] leading-[13px]">
      Mahdesarmaye FINEX2018-plus EURUSD-M30
      <svg width="11" height="11" viewBox="0 0 11 11" fill="none" stroke="#e6e6e6" aria-hidden="true">
        <circle cx="5.500" cy="5.500" r="4.800" />
        <path d="M3.500 3.500v1M7.500 3.500v1M3 8c1-1.800 4-1.800 5 0" />
      </svg>
    </p>
    <p className="mt-[4px] text-[12px]">q-zh1-05_02_2018Strategy 0.200191</p>
    <p>Generated by MetaStrategy 3.8.2</p>
    <div className="ml-auto h-[11px] w-[157px] pt-[4px]">
      <div className="border-t border-dashed border-[#e6e6e6]" />
    </div>
    <p className="text-[11px]">Last Signal:  -</p>
    <p>Open P/L: 0.00</p>
    <p>Account Balance: 50998.58</p>
    <p>Total profits/losses so far: 3/3</p>
    <p>Total P/L so far: 0.00</p>
  </div>
);

const Chart = () => (
  <main className={clsx('mr-[2px] flex flex-1 flex-col overflow-hidden bg-black pt-[2px] pl-[2px] text-[9px] text-[#e0e0e0]', chartFont)}>
    <div className="flex flex-1">
      <div className="relative flex-1 border border-t-[#9a9a9a] border-r-[#e0e0e0] border-b-[#e0e0e0] border-l-[#9a9a9a]">
        <Plot />
        <Logo />
        <p className="absolute top-[1px] left-[2px] flex items-center gap-[4px] leading-[13px] whitespace-pre">
          <svg width="8" height="4" viewBox="0 0 8 4" aria-hidden="true"><path d="M0 0h8L4 4z" fill="#e6e6e6" /></svg>
          EURUSD,M30  1.18654 1.18659 1.18649 1.18659
        </p>
        <Comment />
        <Tooltip />
        <svg width="12" height="18" viewBox="0 0 12 18" className="absolute top-[403px] left-[442px]" aria-hidden="true">
          <path d="M.5.5v14l3.200-3 2.300 5.500 2.200-1-2.300-5.300H11z" fill="#fff" stroke="#222" strokeWidth=".7" />
        </svg>
      </div>
      <div className="relative -mb-[2px] flex w-[39px] flex-col justify-between pt-[8px] leading-[12px]">
        {prices.map((p) => (
          <div key={p} className="flex items-center gap-[2px]">
            <span className="h-px w-[2px] bg-[#e0e0e0]" />
            {p}
          </div>
        ))}
        <div className="absolute top-[446px] left-0 w-[38px] bg-white pl-[4px] leading-[12px] text-black">1.18659</div>
      </div>
    </div>
    <div className="flex h-[18px] pl-px">
      {times.map((t) => (
        <div key={t} className="w-[60px] shrink-0 leading-[12px] whitespace-nowrap">
          <div className="h-[2px] w-px bg-[#e0e0e0]" />
          {t}
        </div>
      ))}
    </div>
  </main>
);

const StatusBar = () => (
  <footer className="flex h-[20px] items-center border-t border-[#d8d8d8] bg-[#f0f0f0] pt-[3px] whitespace-nowrap *:border-l *:border-[#c0c0c0] *:pl-[4px]">
    <div className="flex-1 border-transparent! pl-px!">For Help, press F1</div>
    <div className="w-[109px]">Default</div>
    <div className="w-[95px] text-[10px]">2018.05.08 19:30</div>
    <div className="w-[66px] text-[10px]">O: 1.18839</div>
    <div className="w-[67px] text-[10px]">H: 1.18863</div>
    <div className="w-[64px] text-[10px]">L: 1.18767</div>
    <div className="w-[65px] text-[10px]">C: 1.18795</div>
    <div className="w-[62px] text-[10px]">V: 3264</div>
    <div className="flex w-[122px] items-center gap-[4px]">
      <svg width="22" height="13" viewBox="0 0 22 13" aria-hidden="true">
        {[0, 3, 6, 9, 12, 15, 18].map((x) => (
          <g key={x}>
            <rect x={x} y="1" width="3" height="11" fill="#a9c04a" />
            <rect x={x} y="1" width="2" height="11" fill="#7d9c22" />
            <rect x={x} y={10 - x / 3} width="2" height={2 + x / 3} fill="#235f8c" />
          </g>
        ))}
        <path d="M0 9.500L22 3" stroke="#f0f0f0" />
      </svg>
      19/0 kb
    </div>
  </footer>
);

const App = () => (
  <div className={clsx('relative flex min-h-screen flex-col overflow-hidden bg-[#f0f0f0] text-[11px] leading-[16px] text-[#1a1a1a]', uiFont)}>
    <TitleBar />
    <MenuBar />
    <Toolbar />
    <div className="flex flex-1 border-t border-[#777]">
      <Navigator />
      <Chart />
    </div>
    <StatusBar />
    <div className="h-[3px] bg-[#1c1c1c]" />
    <p className="pointer-events-none absolute bottom-[15px] left-[37px] font-['DejaVu_Sans',sans-serif] text-[28px] leading-[32px] font-bold text-white/60">
      aparat.com/mahdesarmaye
    </p>
  </div>
);

export default App;
